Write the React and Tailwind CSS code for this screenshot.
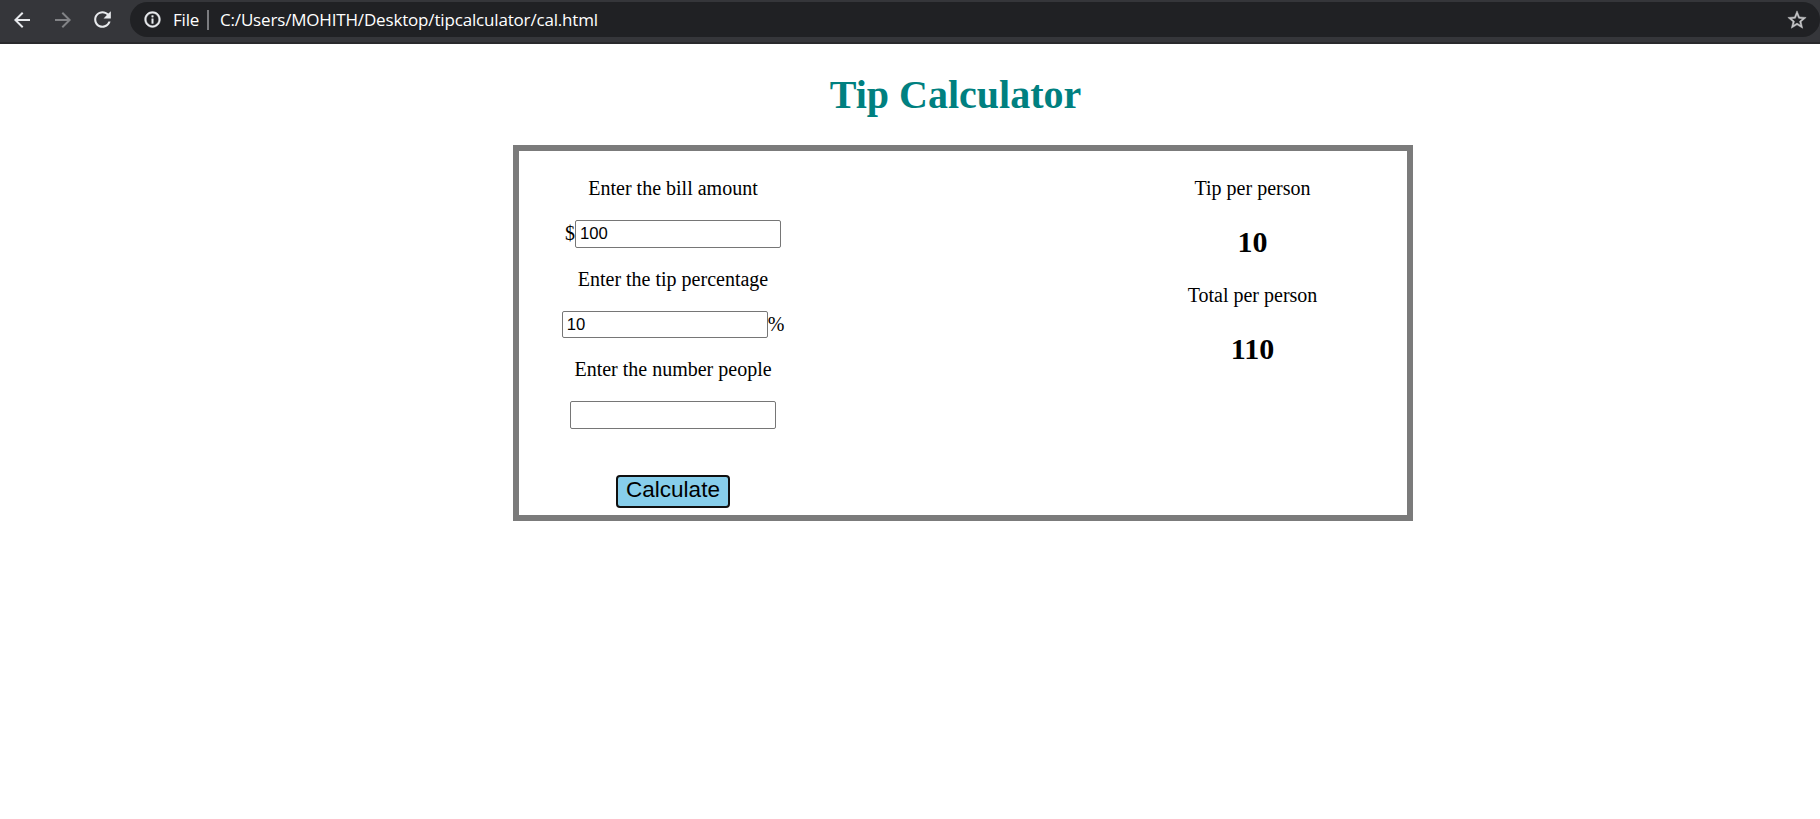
import { useState } from 'react';

function Glyph({ d, className }) {
  return (
    <svg viewBox="0 0 24 24" fill="currentColor" className={className}>
      <path d={d} />
    </svg>
  );
}

const ICONS = {
  back: 'M20 11H7.83l5.59-5.59L12 4l-8 8 8 8 1.41-1.41L7.83 13H20v-2z',
  forward: 'M12 4l-1.41 1.41L16.17 11H4v2h12.17l-5.58 5.59L12 20l8-8z',
  reload:
    'M17.65 6.35C16.2 4.9 14.21 4 12 4c-4.42 0-7.99 3.58-7.99 8s3.57 8 7.99 8c3.73 0 6.84-2.55 7.73-6h-2.08c-.82 2.33-3.04 4-5.65 4-3.31 0-6-2.69-6-6s2.69-6 6-6c1.66 0 3.14.69 4.22 1.78L13 11h7V4l-2.35 2.35z',
  info: 'M11 7h2v2h-2zm0 4h2v6h-2zm1-9C6.48 2 2 6.48 2 12s4.48 10 10 10 10-4.48 10-10S17.52 2 12 2zm0 17.8c-4.3 0-7.8-3.5-7.8-7.8s3.5-7.8 7.8-7.8 7.8 3.5 7.8 7.8-3.5 7.8-7.8 7.8z',
  star: 'M22 9.24l-7.19-.62L12 2 9.19 8.63 2 9.24l5.46 4.73L5.82 21 12 17.27 18.18 21l-1.63-7.03L22 9.24zM12 15.4l-3.76 2.27 1-4.28-3.32-2.88 4.38-.38L12 6.1l1.71 4.04 4.38.38-3.32 2.88 1 4.28L12 15.4z',
};

function Toolbar() {
  return (
    <header className="flex h-11 items-start border-b-2 border-[#29292c] bg-[#35363a] pt-0.5 font-['Open_Sans',sans-serif] text-[17px] text-white">
      <div className="flex h-[35px] w-[130px] items-center pl-[10px] text-[#e8eaed]">
        <Glyph d={ICONS.back} className="size-6" />
        <Glyph d={ICONS.forward} className="ml-[17px] size-6 text-[#828386]" />
        <Glyph d={ICONS.reload} className="ml-[15px] size-[25px]" />
      </div>
      <div className="flex h-[35px] flex-1 items-center rounded-full bg-[#202124] pl-[13px] pr-3">
        <Glyph d={ICONS.info} className="size-[19px] stroke-[#e8eaed] stroke-[0.5] text-[#e8eaed]" />
        <span className="ml-[11px] w-[27px] whitespace-nowrap tracking-[-0.2px]">File</span>
        <span className="ml-[7px] h-5 w-0.5 bg-[#7b7c7f]" />
        <span className="ml-[11px] flex-1 whitespace-nowrap tracking-[-0.17px]">
          C:/Users/MOHITH/Desktop/tipcalculator/cal.html
        </span>
        <Glyph d={ICONS.star} className="size-[22px] stroke-[#c5c6c8] stroke-[0.5] text-[#c5c6c8]" />
      </div>
    </header>
  );
}

function Field({ label, value, onChange, prefix, suffix, height }) {
  return (
    <label className="flex flex-col items-center gap-5">
      <span>{label}</span>
      <span className="flex items-center">
        {prefix && <span className="pb-0.5">{prefix}</span>}
        <input
          value={value}
          onChange={(e) => onChange(e.target.value)}
          className={`${height} w-[206px] rounded-[2px] border border-[#767676] bg-white px-1 font-['Liberation_Sans',sans-serif] text-[16.67px] leading-5 text-black outline-none`}
        />
        {suffix}
      </span>
    </label>
  );
}

function Result({ label, value }) {
  return (
    <div className="flex flex-col items-center gap-[25px]">
      <p>{label}</p>
      <h2 className="text-[30px] leading-[34px] font-bold">{value}</h2>
    </div>
  );
}

export default function App() {
  const [bill, setBill] = useState('100');
  const [tip, setTip] = useState('10');
  const [people, setPeople] = useState('');
  const [result, setResult] = useState({ tip: 10, total: 110 });

  const calculate = () => {
    const count = Number(people) || 1;
    const tipTotal = (Number(bill) * Number(tip)) / 100;
    setResult({ tip: tipTotal / count, total: (Number(bill) + tipTotal) / count });
  };

  return (
    <div className="min-h-screen bg-white font-['Liberation_Serif',serif] text-xl leading-[23px] text-black">
      <Toolbar />
      <h1 className="mt-7 pl-[91px] text-center text-[40px] leading-[46px] font-bold text-[#008080]">
        Tip Calculator
      </h1>
      <main className="mt-[27px] ml-[513px] flex h-[376px] w-[900px] justify-between border-6 border-[#7b7b7b] pt-[26px]">
        <section className="flex w-[308px] flex-col items-center gap-5">
          <Field label="Enter the bill amount" value={bill} onChange={setBill} prefix="$" height="h-7" />
          <Field label="Enter the tip percentage" value={tip} onChange={setTip} suffix="%" height="h-[27px]" />
          <Field label="Enter the number people" value={people} onChange={setPeople} height="h-7" />
          <button
            onClick={calculate}
            className="mt-[26px] h-[33px] w-[114px] rounded-[4px] border-2 border-[#101010] bg-[#87ceeb] pb-1 font-['Liberation_Sans',sans-serif] text-[22.5px] leading-[25px]"
          >
            Calculate
          </button>
        </section>
        <section className="flex w-[309px] flex-col items-center gap-[25px]">
          <Result label="Tip per person" value={result.tip} />
          <Result label="Total per person" value={result.total} />
        </section>
      </main>
    </div>
  );
}
